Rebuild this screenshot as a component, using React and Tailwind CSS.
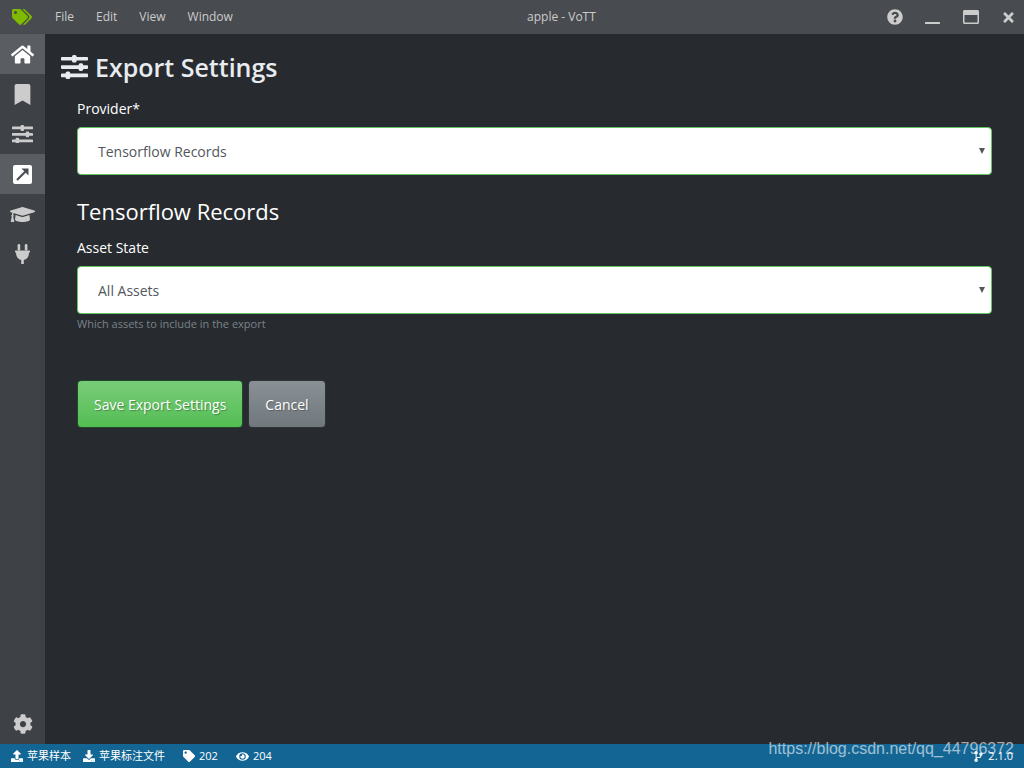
import { useState } from "react";
import {
  FaBookmark,
  FaCodeBranch,
  FaCog,
  FaDownload,
  FaEye,
  FaGraduationCap,
  FaHome,
  FaQuestionCircle,
  FaRegWindowMaximize,
  FaTag,
  FaTags,
  FaTimes,
  FaUpload,
} from "react-icons/fa";

const Sliders = ({ size }) => (
  <svg width={size} viewBox="0 0 27 24" fill="currentColor">
    <rect y="2" width="27" height="3.6" rx="0.8" />
    <rect y="10.3" width="27" height="3.6" rx="0.8" />
    <rect y="18.6" width="27" height="3.6" rx="0.8" />
    <rect x="11" y="0" width="4.6" height="7.6" rx="1.6" />
    <rect x="17.6" y="8.3" width="4.6" height="7.6" rx="1.6" />
    <rect x="4.6" y="16.4" width="4.6" height="7.6" rx="1.6" />
  </svg>
);

const ExportArrow = ({ size }) => (
  <svg width={size} viewBox="0 0 19 19">
    <rect width="19" height="19" rx="2" fill="currentColor" />
    <path d="M4 15 13 6" stroke="#4b4f54" strokeWidth="2.2" />
    <path d="M8.5 3.5h7v7z" fill="#4b4f54" />
  </svg>
);

const Plug = ({ size }) => (
  <svg height={size} viewBox="0 0 15 20" fill="currentColor">
    <rect x="2.6" width="2.6" height="6.4" rx="1.2" />
    <rect x="9.8" width="2.6" height="6.4" rx="1.2" />
    <path d="M.6 6.4h13.8q.6 0 .6.6v1q0 .6-.6.6H14c0 4.2-2 6.6-5.2 7.3V20H6.2v-4.1C3 15.2 1 12.800 1 8.600H.6Q0 8.600 0 8V7q0-.6.6-.6z" />
  </svg>
);

const menus = ["File", "Edit", "View", "Window"];

const links = [
  { title: "Home", icon: FaHome, size: 23, active: true },
  { title: "Active Learning", icon: FaBookmark, size: 21 },
  { title: "Project Settings", icon: Sliders, size: 21 },
  { title: "Export", icon: ExportArrow, size: 19, active: true },
  { title: "Learning", icon: FaGraduationCap, size: 25 },
  { title: "Connections", icon: Plug, size: 20 },
];

const TitleBar = () => (
  <header className="flex h-[34px] shrink-0 items-center bg-[#484b4f] text-[12px] text-[#cccccc]">
    <FaTags size={20} className="mx-3 text-[#7fba00]" />
    <nav className="flex">
      {menus.map((menu) => (
        <button key={menu} type="button" className="px-[11px] leading-[34px]">
          {menu}
        </button>
      ))}
    </nav>
    <div className="flex-1 text-center">apple - VoTT</div>
    <div className="flex items-center gap-[22px] pl-2 pr-2">
      <button type="button" aria-label="Help">
        <FaQuestionCircle size={16} />
      </button>
      <button type="button" aria-label="Minimize">
        <svg width="16" height="16" viewBox="0 0 16 16" fill="currentColor">
          <rect y="13" width="15" height="2" rx="0.5" />
        </svg>
      </button>
      <button type="button" aria-label="Maximize">
        <FaRegWindowMaximize size={16} />
      </button>
      <button type="button" aria-label="Close">
        <FaTimes size={15} />
      </button>
    </div>
  </header>
);

const SideBar = () => (
  <nav className="flex w-[45px] shrink-0 flex-col justify-between bg-[#3e4145] text-[#cccccc]">
    <div>
      {links.map(({ title, icon: Icon, size, active }) => (
        <a
          key={title}
          href="#"
          aria-label={title}
          className={`flex h-10 items-center justify-center ${
            active ? "bg-[#5a5d61] text-white" : ""
          }`}
        >
          <Icon size={size} />
        </a>
      ))}
    </div>
    <a
      href="#"
      aria-label="Settings"
      className="flex h-10 items-center justify-center"
    >
      <FaCog size={20} />
    </a>
  </nav>
);

const Select = ({ id, value, onChange, options }) => (
  <div className="relative mt-[6px]">
    <select
      id={id}
      value={value}
      onChange={(e) => onChange(e.target.value)}
      className="block h-12 w-full appearance-none rounded border border-[#62c462] bg-white px-5 text-[14px] text-[#52575c]"
    >
      {options.map((option) => (
        <option key={option}>{option}</option>
      ))}
    </select>
    <svg
      viewBox="0 0 6 6"
      className="pointer-events-none absolute right-[7px] top-[21px] h-[6px] w-[6px] fill-[#52575c]"
    >
      <path d="M0 0h6L3 6z" />
    </svg>
  </div>
);

const StatusBar = () => (
  <footer className="relative flex h-6 shrink-0 items-center bg-[#136694] px-[11px] text-[11px] text-white">
    <div className="flex items-center gap-1">
      <FaUpload size={12} />
      苹果样本
    </div>
    <div className="ml-3 flex items-center gap-1">
      <FaDownload size={12} />
      苹果标注文件
    </div>
    <div className="ml-[18px] flex items-center gap-1">
      <FaTag size={12} />
      202
    </div>
    <div className="ml-[18px] flex items-center gap-1">
      <FaEye size={13} />
      204
    </div>
    <div className="ml-auto flex items-center gap-1">
      <FaCodeBranch size={11} />
      2.1.0
    </div>
    <div className="absolute bottom-[9px] right-[10px] font-['Liberation_Sans'] text-[16px] leading-5 text-white/60">
      https://blog.csdn.net/qq_44796372
    </div>
  </footer>
);

export default function App() {
  const [provider, setProvider] = useState("Tensorflow Records");
  const [state, setState] = useState("All Assets");

  return (
    <div className="flex h-screen flex-col bg-[#272b30] font-['Open_Sans','Noto_Sans_CJK_SC',sans-serif]">
      <TitleBar />
      <div className="flex min-h-0 flex-1">
        <SideBar />
        <main className="min-w-0 flex-1 overflow-auto px-4 pt-4">
          <h1 className="flex items-center gap-[7px] text-[25px] font-semibold leading-[34px] text-[#e9ecef]">
            <Sliders size={27} />
            Export Settings
          </h1>
          <form
            className="px-4 pt-[13px] text-[14px] text-white"
            onSubmit={(e) => e.preventDefault()}
          >
            <label htmlFor="provider" className="block leading-6">
              Provider*
            </label>
            <Select
              id="provider"
              value={provider}
              onChange={setProvider}
              options={["Tensorflow Records", "VoTT JSON", "Pascal VOC"]}
            />
            <h2 className="mt-5 text-[22px] leading-8">Tensorflow Records</h2>
            <label htmlFor="state" className="mt-[9px] block leading-6">
              Asset State
            </label>
            <Select
              id="state"
              value={state}
              onChange={setState}
              options={["All Assets", "Only Visited Assets"]}
            />
            <p className="mt-[2px] text-[11px] leading-4 text-[#7a8288]">
              Which assets to include in the export
            </p>
            <div className="mt-12 flex gap-[5px]">
              <button
                type="submit"
                className="h-12 rounded border border-[#1f4a26] bg-linear-to-b from-[#78cc78] to-[#53be53] px-4 [text-shadow:1px_1px_1px_rgba(0,0,0,0.3)]"
              >
                Save Export Settings
              </button>
              <button
                type="button"
                className="h-12 rounded border border-[#2f3338] bg-linear-to-b from-[#8a9196] to-[#70787d] px-4 [text-shadow:1px_1px_1px_rgba(0,0,0,0.3)]"
              >
                Cancel
              </button>
            </div>
          </form>
        </main>
      </div>
      <StatusBar />
    </div>
  );
}
